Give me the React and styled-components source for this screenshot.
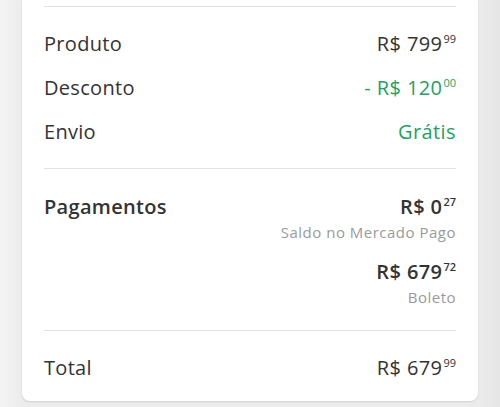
import React from 'react';
import styled, { createGlobalStyle } from 'styled-components';

const GlobalStyle = createGlobalStyle`
  html, body {
    margin: 0;
    padding: 0;
    background: #ededed;
    font-family: "Open Sans", "Liberation Sans", sans-serif;
  }
`

const Page = styled.div `
  width: 500px;
  height: 407px;
  overflow: hidden;
  background: linear-gradient(to right, #f4f4f4 0px, #ececec 22px, #ececec 478px, #e6e6e6 500px);
  padding: 0 22px;
  box-sizing: border-box;
`

const Card = styled.div `
  background: #fff;
  border-radius: 0 0 8px 8px;
  box-shadow: 0 1px 2px rgba(0, 0, 0, 0.12);
  padding: 6px 22px 0;
  height: 401px;
  box-sizing: border-box;
`

const Divider = styled.div `
  height: 1px;
  background: #e2e2e2;
`

const Section = styled.div `
  display: flex;
  flex-direction: column;
  padding: ${({ pad }) => pad || '0'};
  gap: ${({ gap }) => gap || '0'};
`

const Row = styled.div `
  display: flex;
  justify-content: space-between;
  align-items: flex-start;
  line-height: 26px;
`

const Label = styled.span `
  font-size: 20px;
  letter-spacing: 0.3px;
  color: #333;
  font-weight: ${({ bold }) => bold ? 600 : 400};
`

const Payments = styled.div `
  display: flex;
  flex-direction: column;
  align-items: flex-end;
  gap: 15px;
`

const PayItem = styled.div `
  display: flex;
  flex-direction: column;
  align-items: flex-end;
`

const Amount = styled.span `
  font-size: 20px;
  letter-spacing: 0.4px;
  color: ${({ green }) => green ? '#1ba360' : '#333'};
  font-weight: ${({ bold }) => bold ? 600 : 400};
  white-space: nowrap;
`

const Cents = styled.sup `
  font-size: 11px;
  letter-spacing: 0;
  vertical-align: 8px;
  line-height: 0;
  margin-left: 1px;
`

const Note = styled.span `
  font-size: 15px;
  letter-spacing: 0.5px;
  color: #9a9a9a;
  line-height: 24px;
`

const Price = ({ value, cents, green, bold, minus }) => (
  <Amount green={green} bold={bold}>
    {minus ? '- ' : ''}R$ {value}<Cents>{cents}</Cents>
  </Amount>
)

export default function App() {
  return (
    <Page>
      <GlobalStyle />
      <Card>
        <Divider />
        <Section pad="24px 0 23px" gap="18px">
          <Row>
            <Label>Produto</Label>
            <Price value="799" cents="99" />
          </Row>
          <Row>
            <Label>Desconto</Label>
            <Price value="120" cents="00" green minus />
          </Row>
          <Row>
            <Label>Envio</Label>
            <Amount green>Grátis</Amount>
          </Row>
        </Section>
        <Divider />
        <Section pad="25px 0 21px">
          <Row>
            <Label bold>Pagamentos</Label>
            <Payments>
              <PayItem>
                <Price value="0" cents="27" bold />
                <Note>Saldo no Mercado Pago</Note>
              </PayItem>
              <PayItem>
                <Price value="679" cents="72" bold />
                <Note>Boleto</Note>
              </PayItem>
            </Payments>
          </Row>
        </Section>
        <Divider />
        <Section pad="24px 0 0">
          <Row>
            <Label>Total</Label>
            <Price value="679" cents="99" />
          </Row>
        </Section>
      </Card>
    </Page>
  );
}
